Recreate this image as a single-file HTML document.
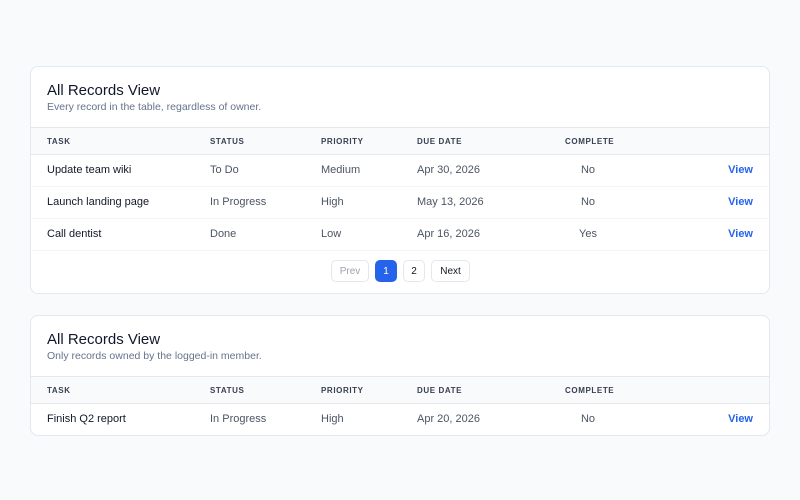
<!DOCTYPE html>
<html><head><style>
*{box-sizing:border-box;margin:0;padding:0}
body{width:800px;height:500px;background:#f8fafc;font-family:"Liberation Sans",sans-serif;position:relative;color:#111827}
.card{position:absolute;left:30px;width:740px;background:#fff;border:1px solid #e2e8f0;border-radius:8px;overflow:hidden}
.t{position:absolute;left:16px;font-size:15px;color:#0f172a}
.s{position:absolute;left:16px;font-size:10.5px;color:#64748b}
.hd{position:absolute;left:0;width:100%;height:28px;background:#f8fafc;border-top:1px solid #e5e7eb;border-bottom:1px solid #e5e7eb}
.hd span{position:absolute;top:9px;font-size:8px;font-weight:bold;letter-spacing:.6px;color:#374151}
.r{position:absolute;left:0;width:100%;height:32px;border-bottom:1px solid #f1f5f9}
.r span{position:absolute;top:9px;font-size:11px;color:#4b5563}
.r span.a{color:#111827}
.r span.c{width:60px;text-align:center;left:527px}
.r span.v{right:16px;color:#2563eb;font-weight:bold}
.b{position:absolute;top:260px;height:22px;border:1px solid #e5e7eb;border-radius:5px;font-size:10px;display:flex;align-items:center;justify-content:center;padding-top:1px;background:#fff;color:#111827}
</style></head><body>
<div class="card" style="top:66px;height:228px">
<div class="t" style="top:15px">All Records View</div>
<div class="s" style="top:34px">Every record in the table, regardless of owner.</div>
<div class="hd" style="top:60px"><span style="left:16px">TASK</span><span style="left:179px">STATUS</span><span style="left:290px">PRIORITY</span><span style="left:386px">DUE DATE</span><span style="left:534px">COMPLETE</span></div>
<div class="r" style="top:88px"><span class="a" style="left:16px">Update team wiki</span><span style="left:179px">To Do</span><span style="left:290px">Medium</span><span style="left:386px">Apr 30, 2026</span><span class="c">No</span><span class="v">View</span></div>
<div class="r" style="top:120px"><span class="a" style="left:16px">Launch landing page</span><span style="left:179px">In Progress</span><span style="left:290px">High</span><span style="left:386px">May 13, 2026</span><span class="c">No</span><span class="v">View</span></div>
<div class="r" style="top:152px"><span class="a" style="left:16px">Call dentist</span><span style="left:179px">Done</span><span style="left:290px">Low</span><span style="left:386px">Apr 16, 2026</span><span class="c">Yes</span><span class="v">View</span></div>
</div>
<div class="b" style="left:331px;width:38px;color:#9ca3af">Prev</div>
<div class="b" style="left:375px;width:22px;background:#2563eb;border-color:#2563eb;color:#fff">1</div>
<div class="b" style="left:403px;width:22px">2</div>
<div class="b" style="left:431px;width:39px">Next</div>
<div class="card" style="top:315px;height:121px">
<div class="t" style="top:15px">All Records View</div>
<div class="s" style="top:34px">Only records owned by the logged-in member.</div>
<div class="hd" style="top:60px"><span style="left:16px">TASK</span><span style="left:179px">STATUS</span><span style="left:290px">PRIORITY</span><span style="left:386px">DUE DATE</span><span style="left:534px">COMPLETE</span></div>
<div class="r" style="top:88px;border:none"><span class="a" style="left:16px">Finish Q2 report</span><span style="left:179px">In Progress</span><span style="left:290px">High</span><span style="left:386px">Apr 20, 2026</span><span class="c">No</span><span class="v">View</span></div>
</div>
</body></html>
